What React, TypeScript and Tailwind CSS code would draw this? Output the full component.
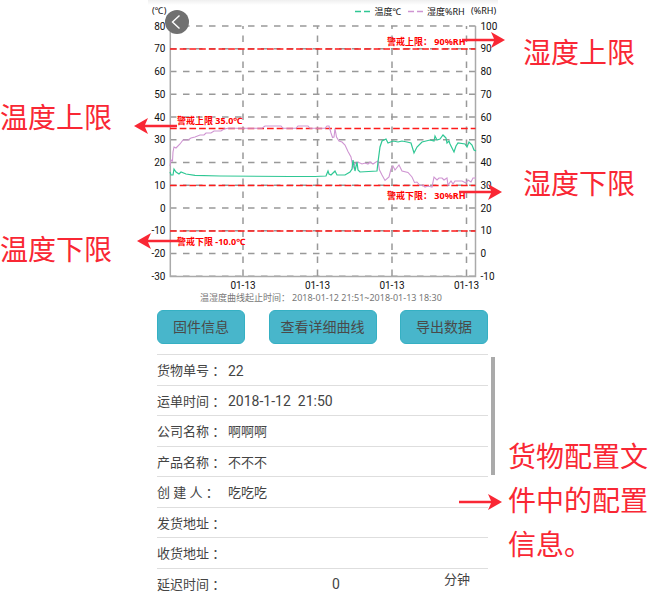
import React from "react";

const TEMPERATURE =
  "170,172 171,175 173,175 174,169 176,172 179,174 181,172 186,174 195,175.3 220,176 290,176.5 315,176.5 326,176 328,171 329,174 331,175 333,173 335,171 337,175 345,175 350,172 352,169 353,160 355,171 357,162 358,170 360,172 377,171 378,162 380,147 382,141 386,139 388,143 393,141 398,142 402,141 407,142 411,143 414,153 417,147 422,142 430,140 434,141 435,136 437,140 440,139 443,135 445,137 446,138 447,143 449,141 450,144 454,152 456,146 458,143 465,144 467,147 469,142 472,145 474,150 476,151";

const HUMIDITY =
  "170,166 171,160 172.5,161 173,152 174,147 176,148 180,144 183,140 188,140 191,138 195,137 200,135 204,135 206,133 211,133 214,131 221,131 224,129 228,128.3 262,128.3 265,126 281,126 283,128.3 296,128.3 298,126 308,126 310,128.3 325,128.3 327,126 329,126 331,133 332.5,137.5 334,137 335,128.5 336.5,137 339,141 342,142 345,145 348,151.5 351,157 353,168 354.5,164 358,162 362,164 365,163 368,164 370,162 373,164 376,162 378,161 379.5,170 382,175 385,180.5 389,177 391,169 393,166 395,170 399,165 402,171 408,172.5 412,177 414.5,182.5 417,182 420,185.5 423,185 425,187 428,186 432,187 434,177 437,180 439,178 442,178 444,180 447,178 448,185 451,181 453,184 455,181 462,181 466,183 468,180 471,182 473,178 476,178";

const LEVELS = [80, 70, 60, 50, 40, 30, 20, 10, 0, -10, -20, -30];
const levelY = (value: number) => 208 - value * 2.275;

const TICKS = [243, 317.5, 392, 466.5];

const LIMITS = [
  { y: 49, x: 387, labelY: 44.5, text: "警戒上限： 90%RH" },
  { y: 128.5, x: 177, labelY: 124, text: "警戒上限 35.0℃" },
  { y: 185.5, x: 387, labelY: 199, text: "警戒下限： 30%RH" },
  { y: 231, x: 177, labelY: 244.5, text: "警戒下限 -10.0℃" },
];

function Chart() {
  return (
    <svg
      viewBox="148 0 350 305"
      className="block w-full font-[Roboto,'Noto_Sans_CJK_SC',sans-serif]"
      role="img"
      aria-label="温湿度曲线"
    >
      <g stroke="#999" strokeWidth="1.5" fill="none">
        {LEVELS.map((v) => (
          <path key={v} d={`M170 ${levelY(v)}H475.5`} strokeDasharray="6.5 6.5" />
        ))}
        {TICKS.map((x) => (
          <path key={x} d={`M${x} 276V26`} strokeDasharray="6.5 6.5" />
        ))}
        <path d="M170.3 26V276.5H475.5V26" stroke="#aaa" />
      </g>
      <g stroke="#ff1a1a" strokeWidth="1.5">
        {LIMITS.map((l) => (
          <path key={l.y} d={`M170 ${l.y}H475.5`} strokeDasharray="6.7 3" />
        ))}
      </g>
      <polyline points={HUMIDITY} fill="none" stroke="#cf95d2" strokeWidth="1.1" />
      <polyline points={TEMPERATURE} fill="none" stroke="#2fc794" strokeWidth="1.2" />
      <g fontSize="10" fill="#111">
        {LEVELS.map((v) => (
          <g key={v}>
            <text x="165.5" y={levelY(v) + 3.5} textAnchor="end">
              {v}
            </text>
            <text x="480.5" y={levelY(v) + 3.5}>
              {v + 20}
            </text>
          </g>
        ))}
        {TICKS.map((x) => (
          <text key={x} x={x} y="289" textAnchor="middle">
            01-13
          </text>
        ))}
      </g>
      <g
        fontSize="9"
        fill="#f00"
        className="font-['Noto_Sans','Noto_Sans_CJK_SC',sans-serif] font-bold"
      >
        {LIMITS.map((l) => (
          <text key={l.y} x={l.x} y={l.labelY}>
            {l.text}
          </text>
        ))}
      </g>
      <g
        fontSize="9"
        fill="#111"
        className="font-['Noto_Sans','Noto_Sans_CJK_SC',sans-serif]"
      >
        <text x="152" y="14">(℃)</text>
        <text x="374.5" y="15">温度℃</text>
        <text x="427" y="15">湿度%RH</text>
        <text x="471" y="14">(%RH)</text>
      </g>
      <path d="M355 11.5h15" stroke="#2fc794" strokeWidth="1.3" strokeDasharray="6 3" />
      <path d="M408 11.5h15" stroke="#cf95d2" strokeWidth="1.3" strokeDasharray="6 3" />
      <text
        x="200"
        y="301"
        fontSize="9"
        fill="#777"
        className="font-['Noto_Sans','Noto_Sans_CJK_SC',sans-serif]"
      >
        温湿度曲线起止时间：
        <tspan x="292">2018-01-12 21:51~2018-01-13 18:30</tspan>
      </text>
    </svg>
  );
}

function Arrow({ className }: { className: string }) {
  return (
    <svg viewBox="0 0 43 16" className={"absolute h-4 w-[43px] " + className} aria-hidden="true">
      <path d="M0 6.8H32L29 0L43 8L29 16L32 9.2H0Z" fill="#f92734" />
    </svg>
  );
}

function ActionButton({ width, children }: { width: string; children: string }) {
  return (
    <button
      type="button"
      className={
        "h-[34px] rounded-md border border-[#35b0c3] bg-[#48b6cb] text-sm text-[#4a4a4a] " + width
      }
    >
      {children}
    </button>
  );
}

function Row({ label, children }: { label: string; children?: React.ReactNode }) {
  return (
    <div className="flex items-center border-t border-[#dedede] pt-0.5">
      <dt className="min-w-[71px] whitespace-pre">{label}</dt>
      <dd className="flex flex-1 items-center whitespace-pre">{children}</dd>
    </div>
  );
}

export default function App() {
  return (
    <div className="relative grid grid-cols-[148px_minmax(0,1fr)_150px] bg-white font-[Roboto,'Noto_Sans_CJK_SC',sans-serif]">
      <aside className="flex flex-col gap-[92px] pt-[99px] text-[28px] leading-10 text-[#f92734]">
        <p>温度上限</p>
        <p>温度下限</p>
      </aside>

      <main className="relative bg-linear-to-b from-[#efefef] to-white to-[5px]">
        <button
          type="button"
          aria-label="返回"
          className="absolute top-[10px] left-[17px] flex size-6 items-center justify-center rounded-full bg-[#707070]"
        >
          <svg viewBox="0 0 24 24" className="size-6" fill="none" stroke="#fff" strokeWidth="1.4">
            <path d="M14.5 5.5L7.5 12L14.5 18.5" />
          </svg>
        </button>
        <Chart />
        <div className="flex justify-between pt-[5px] pr-[10px] pl-[9px]">
          <ActionButton width="w-[88px]">固件信息</ActionButton>
          <ActionButton width="w-[108px]">查看详细曲线</ActionButton>
          <ActionButton width="w-[88px]">导出数据</ActionButton>
        </div>
        <div className="mt-[10px] flex h-[243px] overflow-hidden pl-[9px]">
          <dl className="grid h-[244px] flex-1 grid-rows-8 text-[13px] text-[#444]">
            <Row label="货物单号 ：">
              <span className="text-sm">22</span>
            </Row>
            <Row label="运单时间 ：">
              <span className="text-sm">{"2018-1-12  21:50"}</span>
            </Row>
            <Row label="公司名称 ：">啊啊啊</Row>
            <Row label="产品名称 ：">不不不</Row>
            <Row label="创 建 人 ：">吃吃吃</Row>
            <Row label="发货地址 ：" />
            <Row label="收货地址 ：" />
            <Row label="延迟时间 ：">
              <input
                aria-label="延迟时间"
                defaultValue="0"
                className="w-0 flex-1 text-center text-sm outline-none"
              />
              <span className="pr-[18px] pb-[10px]">分钟</span>
            </Row>
          </dl>
          <div className="mt-[3px] mr-[3px] ml-[3px] h-[118px] w-1 bg-[#aaa]" />
        </div>
      </main>

      <aside className="flex flex-col pt-[34px] text-[28px] text-[#f92734]">
        <p className="pl-[25px] leading-10">湿度上限</p>
        <p className="mt-[91px] pl-[25px] leading-10">湿度下限</p>
        <p className="mt-[231px] pl-[10px] leading-[44px]">货物配置文件中的配置信息。</p>
      </aside>

      <Arrow className="top-[118px] left-[134px] rotate-180" />
      <Arrow className="top-[233px] left-[137px] rotate-180" />
      <Arrow className="top-[32px] right-[143px]" />
      <Arrow className="top-[184px] right-[146px]" />
      <Arrow className="top-[494px] right-[146px]" />
    </div>
  );
}
